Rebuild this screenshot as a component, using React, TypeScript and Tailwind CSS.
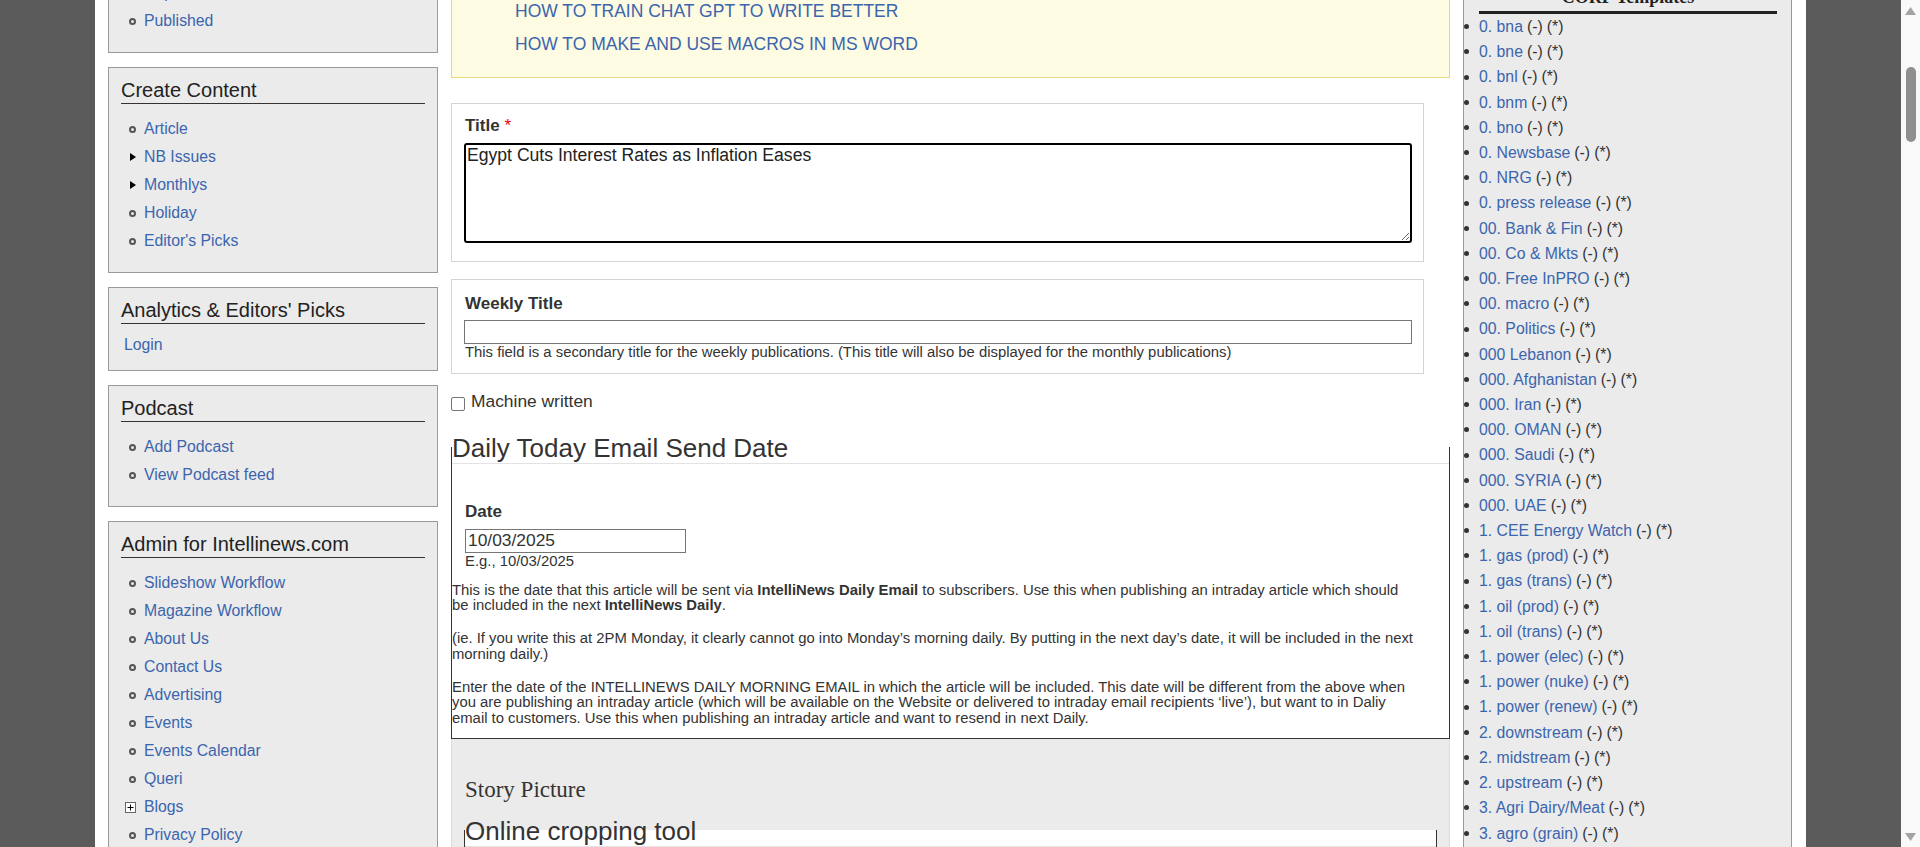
import React from 'react';

const LINK = 'text-[#3b65ad] no-underline';

type MarkerKind = 'circle' | 'arrow' | 'plus';

const Marker = ({ kind }: { kind: MarkerKind }) => {
  if (kind === 'arrow') {
    return <span className="ml-[9px] mr-[8px] h-0 w-0 border-y-[4px] border-l-[6px] border-y-transparent border-l-black" />;
  }
  if (kind === 'plus') {
    return (
      <svg className="ml-[4px] mr-[8px]" width="11" height="11" viewBox="0 0 11 11">
        <rect x="0.5" y="0.5" width="10" height="10" fill="#fff" stroke="#666" />
        <path d="M2.5 5.5h6M5.5 2.5v6" stroke="#000" />
      </svg>
    );
  }
  return <span className="ml-[8px] mr-[8px] h-[7px] w-[7px] rounded-full border-2 border-[#555]" />;
};

const Block = ({ title, children }: { title: string; children: React.ReactNode }) => (
  <div className="border border-[#9a9a9a] bg-[#ebebeb] px-[12px] pt-[10px]">
    <h2 className="border-b border-[#333] pb-[1px] text-[20px] leading-[24px] text-[#222]">{title}</h2>
    {children}
  </div>
);

const LinkList = ({ items }: { items: [string, MarkerKind][] }) => (
  <ul className="mb-[17px] mt-[11px]">
    {items.map(([label, kind]) => (
      <li key={label} className="flex items-center text-[15.8px] leading-[28px]">
        <Marker kind={kind} />
        <a href="#" className={LINK}>
          {label}
        </a>
      </li>
    ))}
  </ul>
);

const Fieldset = ({ legend, className, children }: { legend: string; className?: string; children: React.ReactNode }) => (
  <fieldset className={`min-w-0 border border-[#333] ${className ?? ''}`}>
    <legend className="w-full border-b border-[#e3e3e3] pt-[2px] text-[26px] leading-[30px] text-[#333]">{legend}</legend>
    {children}
  </fieldset>
);

const templates = [
  '0. bna', '0. bne', '0. bnl', '0. bnm', '0. bno', '0. Newsbase', '0. NRG', '0. press release',
  '00. Bank & Fin', '00. Co & Mkts', '00. Free InPRO', '00. macro', '00. Politics', '000 Lebanon',
  '000. Afghanistan', '000. Iran', '000. OMAN', '000. Saudi', '000. SYRIA', '000. UAE',
  '1. CEE Energy Watch', '1. gas (prod)', '1. gas (trans)', '1. oil (prod)', '1. oil (trans)',
  '1. power (elec)', '1. power (nuke)', '1. power (renew)', '2. downstream', '2. midstream',
  '2. upstream', '3. Agri Dairy/Meat', '3. agro (grain)',
];

const LeftColumn = () => (
  <div className="-mt-[69px] flex w-[330px] shrink-0 flex-col gap-[14px]">
    <Block title="Workflow">
      <LinkList items={[['Unpublished', 'circle'], ['Published', 'circle']]} />
    </Block>
    <Block title="Create Content">
      <LinkList
        items={[
          ['Article', 'circle'],
          ['NB Issues', 'arrow'],
          ['Monthlys', 'arrow'],
          ['Holiday', 'circle'],
          ["Editor's Picks", 'circle'],
        ]}
      />
    </Block>
    <Block title="Analytics & Editors' Picks">
      <div className="mt-[7px] pb-[11px] pl-[3px] text-[15.8px] leading-[28px]">
        <a href="#" className={LINK}>
          Login
        </a>
      </div>
    </Block>
    <Block title="Podcast">
      <LinkList items={[['Add Podcast', 'circle'], ['View Podcast feed', 'circle']]} />
    </Block>
    <Block title="Admin for Intellinews.com">
      <LinkList
        items={[
          ['Slideshow Workflow', 'circle'],
          ['Magazine Workflow', 'circle'],
          ['About Us', 'circle'],
          ['Contact Us', 'circle'],
          ['Advertising', 'circle'],
          ['Events', 'circle'],
          ['Events Calendar', 'circle'],
          ['Queri', 'circle'],
          ['Blogs', 'plus'],
          ['Privacy Policy', 'circle'],
        ]}
      />
    </Block>
  </div>
);

const MainColumn = () => (
  <div className="-mt-[22px] flex w-[999px] shrink-0 flex-col text-[#333]">
    {/* related how-to links */}
    <div className="border border-[#e6d97c] bg-[#fefbe3] pb-[16px] pl-[63px] pt-[16px]">
      <ul className="text-[17.5px] leading-[33px]">
        <li>
          <a href="#" className={LINK}>HOW TO TRAIN CHAT GPT TO WRITE BETTER</a>
        </li>
        <li>
          <a href="#" className={LINK}>HOW TO MAKE AND USE MACROS IN MS WORD</a>
        </li>
      </ul>
    </div>

    <div className="mt-[25px] w-[973px] border border-[#d4d4d4] pb-[18px] pl-[12px] pr-[11px] pt-[12px]">
      <label className="block pl-[1px] text-[17px] font-bold">
        Title <span className="font-normal text-[#e00]">*</span>
      </label>
      <textarea
        defaultValue="Egypt Cuts Interest Rates as Inflation Eases"
        className="mt-[7px] block h-[100px] w-[948px] rounded-[3px] border-2 border-black px-[1px] text-[17.6px] leading-[1.15] text-[#222] outline-none"
      />
    </div>

    <div className="mt-[17px] w-[973px] border border-[#d4d4d4] pb-[12px] pl-[12px] pr-[11px] pt-[14px]">
      <label className="block pl-[1px] text-[17px] font-bold">Weekly Title</label>
      <input type="text" className="mt-[7px] block h-[24px] w-[948px] border border-[#767676] outline-none" />
      <div className="pl-[1px] text-[14.85px]">
        This field is a secondary title for the weekly publications. (This title will also be displayed for the monthly publications)
      </div>
    </div>

    <label className="mt-[17px] flex items-start text-[17.4px]">
      <input type="checkbox" className="mr-[6px] mt-[6px] h-[14px] w-[14px] appearance-none rounded-[2px] border border-[#767676] bg-white" />
      Machine written
    </label>

    <Fieldset legend="Daily Today Email Send Date" className="mt-[20px] pb-[11px]">
      <div className="pl-[13px] pt-[38px]">
        <label className="block text-[17px] font-bold">Date</label>
        <input
          type="text"
          defaultValue="10/03/2025"
          className="mt-[7px] block h-[24px] w-[221px] border border-[#767676] px-[2px] text-[17.4px] leading-[1.15] outline-none"
        />
        <div className="text-[14.85px]">E.g., 10/03/2025</div>
      </div>
      <div className="mt-[13px] flex flex-col gap-[17px] pr-[31px] text-[14.85px] leading-[15.7px]">
        <p>
          This is the date that this article will be sent via <b>IntelliNews Daily Email</b> to subscribers. Use this when publishing an
          intraday article which should be included in the next <b>IntelliNews Daily</b>.
        </p>
        <p>
          (ie. If you write this at 2PM Monday, it clearly cannot go into Monday’s morning daily. By putting in the next day’s date, it will
          be included in the next morning daily.)
        </p>
        <p>
          Enter the date of the INTELLINEWS DAILY MORNING EMAIL in which the article will be included. This date will be different from the
          above when you are publishing an intraday article (which will be available on the Website or delivered to intraday email recipients
          ‘live’), but want to in Daliy email to customers. Use this when publishing an intraday article and want to resend in next Daily.
        </p>
      </div>
    </Fieldset>

    <div className="flex-1 border-x border-[#dcdcdc] bg-[#ebebeb] px-[12px] pt-[38px]">
      <h3 className="pl-[1px] font-['Liberation_Serif','Times_New_Roman',serif] text-[23px] text-[#333]">Story Picture</h3>
      <Fieldset legend="Online cropping tool" className="mt-[11px] bg-white">
        <div className="h-[160px]" />
      </Fieldset>
    </div>
  </div>
);

const RightColumn = () => (
  <div className="-mt-[40px] w-[329px] shrink-0 border-x border-[#9a9a9a] bg-[#ebebeb] pt-[25px]">
    <h2 className="mx-[14px] ml-[15px] border-b-[3px] border-[#222] pb-[2px] text-center font-['Liberation_Serif','Times_New_Roman',serif] text-[18px] font-bold leading-[24px] text-[#222]">
      CORP Templates
    </h2>
    <ul className="pl-[15px] text-[15.8px] leading-[25.2px] text-[#333]">
      {templates.map((t) => (
        <li key={t} className="flex items-center">
          <span className="-ml-[15px] mr-[10px] h-[5px] w-[5px] rounded-full bg-[#333]" />
          <a href="#" className={LINK}>
            {t}
          </a>
          <span className="ml-[4px]">(-)</span>
          <span className="ml-[4px]">(*)</span>
        </li>
      ))}
    </ul>
  </div>
);

const Scrollbar = () => (
  <div className="flex w-[19px] shrink-0 flex-col items-center bg-[#f9f9f9]">
    <svg className="mt-[7px]" width="11" height="8" viewBox="0 0 11 8">
      <polygon points="0,8 5.5,0 11,8" fill="#a3a3a3" />
    </svg>
    <div className="mt-[52px] h-[75px] w-[10px] rounded-full bg-[#8f8f8f]" />
    <div className="flex-1" />
    <svg className="mb-[6px]" width="11" height="8" viewBox="0 0 11 8">
      <polygon points="0,0 11,0 5.5,8" fill="#a3a3a3" />
    </svg>
  </div>
);

export default function App() {
  return (
    <div className="flex h-[847px] w-[1920px] overflow-hidden bg-[#5b5b5b] font-['Liberation_Sans',Arial,sans-serif] leading-[1.15]">
      <div className="w-[95px] shrink-0" />
      <div className="flex w-[1711px] shrink-0 gap-[13px] bg-white px-[13px]">
        <LeftColumn />
        <MainColumn />
        <RightColumn />
      </div>
      <div className="flex-1" />
      <Scrollbar />
    </div>
  );
}
